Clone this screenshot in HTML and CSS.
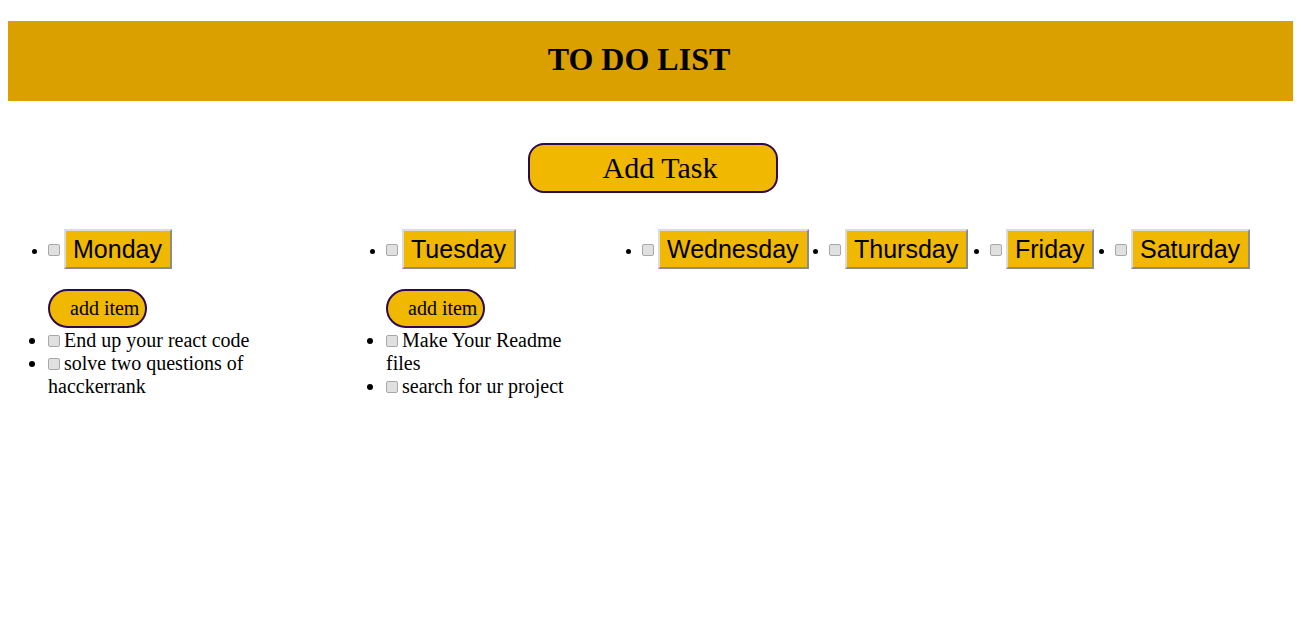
FILE: index.html
```html
<!DOCTYPE html>
<html>
<head>
<meta charset="utf-8">
<link rel="stylesheet" href="styles.css">
</head>
<body>
<header class="banner"><h1 class="title">TO DO LIST</h1></header>
<div class="add-task-wrap"><button class="add-task">Add Task</button></div>
<div class="days">
  <div class="day day-mon">
    <ul class="day-list"><li><input type="checkbox" class="check"><button class="day-btn">Monday</button></li></ul>
    <div class="add-item-wrap"><button class="add-item">add item</button></div>
    <ul class="tasks">
      <li><input type="checkbox" class="check">End up your react code</li>
      <li><input type="checkbox" class="check">solve two questions of hacckerrank</li>
    </ul>
  </div>
  <div class="day day-tue">
    <ul class="day-list"><li><input type="checkbox" class="check"><button class="day-btn">Tuesday</button></li></ul>
    <div class="add-item-wrap"><button class="add-item">add item</button></div>
    <ul class="tasks">
      <li><input type="checkbox" class="check">Make Your Readme files</li>
      <li><input type="checkbox" class="check">search for ur project</li>
    </ul>
  </div>
  <div class="day day-wed">
    <ul class="day-list"><li><input type="checkbox" class="check"><button class="day-btn">Wednesday</button></li></ul>
  </div>
  <div class="day day-thu">
    <ul class="day-list"><li><input type="checkbox" class="check"><button class="day-btn">Thursday</button></li></ul>
  </div>
  <div class="day day-fri">
    <ul class="day-list"><li><input type="checkbox" class="check"><button class="day-btn">Friday</button></li></ul>
  </div>
  <div class="day day-sat">
    <ul class="day-list"><li><input type="checkbox" class="check"><button class="day-btn">Saturday</button></li></ul>
  </div>
</div>
</body>
</html>
```
FILE: styles.css
```css
html, body {
  background: #ffffff;
}
body {
  margin: 21px 8px 8px;
  font-family: "Liberation Serif", "Times New Roman", serif;
  font-size: 16px;
  color: #000;
}
.banner {
  background: #daa000;
  height: 80px;
  display: flex;
  align-items: center;
  justify-content: center;
  padding-right: 23px;
}
.title {
  margin: 0;
  font-size: 32px;
  font-weight: bold;
  line-height: 37px;
  position: relative;
  top: -2px;
}
.add-task-wrap {
  display: flex;
  justify-content: center;
  margin-top: 42px;
  padding-left: 5px;
}
.add-task {
  width: 250px;
  height: 50px;
  background: #f0b800;
  border: 2px solid #2c0a4f;
  border-radius: 16px;
  font-family: "Liberation Serif", "Times New Roman", serif;
  font-size: 30px;
  color: #000;
  padding: 0 0 0 14px;
}
.days {
  display: flex;
  margin-top: 20px;
}
.day-mon { width: 338px; }
.day-tue { width: 256px; }
.day-wed { width: 187px; }
.day-thu { width: 161px; }
.day-fri { width: 125px; }
.day-sat { width: 218px; }
.day { flex: none; }
.day-list {
  margin: 16px 0;
  padding-left: 40px;
  white-space: nowrap;
}
.day-list li {
  height: 40px;
  line-height: 44px;
}
.day-list .check {
  position: relative;
  top: -2px;
}
.check {
  -webkit-appearance: none;
  appearance: none;
  box-sizing: border-box;
  width: 12px;
  height: 12px;
  margin: 0 4px 0 0;
  border: 1px solid #a8a8a8;
  border-radius: 2px;
  background: #e0e0e0;
  vertical-align: middle;
}
.day-btn {
  height: 40px;
  padding: 0 8px 0 7px;
  background: #f0b800;
  border: 2px solid;
  border-color: #dcdcdc #8c8c8c #8c8c8c #dcdcdc;
  font-family: "Liberation Sans", Arial, sans-serif;
  font-size: 25px;
  color: #000;
  vertical-align: middle;
  position: relative;
  top: -3px;
}
.add-item-wrap {
  padding-left: 40px;
  margin-top: 20px;
  height: 40px;
}
.add-item {
  height: 39px;
  padding: 0 6px 0 20px;
  background: #f0b800;
  border: 2px solid #2c0a4f;
  border-radius: 20px;
  font-family: "Liberation Serif", "Times New Roman", serif;
  font-size: 20px;
  color: #000;
  white-space: nowrap;
}
.tasks {
  margin: 0;
  padding-left: 40px;
  font-size: 20px;
  line-height: 23px;
}
.day-tue .tasks {
  padding-right: 6px;
}
.tasks .check {
  vertical-align: baseline;
}
```
